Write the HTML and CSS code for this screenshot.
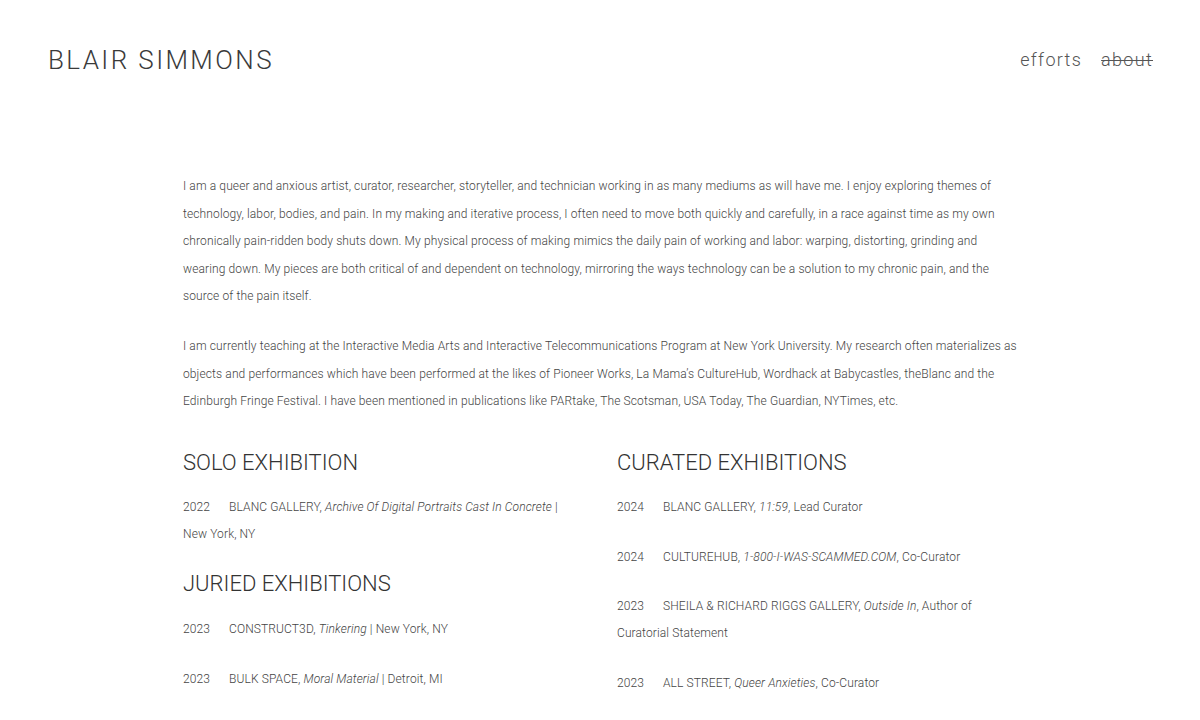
FILE: index.html
```html
<!DOCTYPE html>
<html lang="en">
<head>
<meta charset="utf-8">
<title>Blair Simmons — about</title>
<link rel="stylesheet" href="styles.css">
</head>
<body>
<header class="site-header">
  <a class="site-title" href="#">BLAIR SIMMONS</a>
  <nav class="site-nav">
    <a href="#" class="nav-link">efforts</a>
    <a href="#" class="nav-link nav-current">about</a>
  </nav>
</header>
<main class="content">
  <section class="intro">
    <p>I am a queer and anxious artist, curator, researcher, storyteller, and technician working in as many mediums as will have me. I enjoy exploring themes of technology, labor, bodies, and pain. In my making and iterative process, I often need to move both quickly and carefully, in a race against time as my own chronically pain-ridden body shuts down. My physical process of making mimics the daily pain of working and labor: warping, distorting, grinding and wearing down. My pieces are both critical of and dependent on technology, mirroring the ways technology can be a solution to my chronic pain, and the source of the pain itself.</p>
    <p>I am currently teaching at the Interactive Media Arts and Interactive Telecommunications Program at New York University. My research often materializes as objects and performances which have been performed at the likes of Pioneer Works, La Mama’s CultureHub, Wordhack at Babycastles, theBlanc and the Edinburgh Fringe Festival. I have been mentioned in publications like PARtake, The Scotsman, USA Today, The Guardian, NYTimes, etc.</p>
  </section>
  <section class="columns">
    <div class="col">
      <h2>SOLO EXHIBITION</h2>
      <p class="entry"><span class="year">2022</span>BLANC GALLERY, <em>Archive Of Digital Portraits Cast In Concrete</em> | New York, NY</p>
      <h2>JURIED EXHIBITIONS</h2>
      <p class="entry"><span class="year">2023</span>CONSTRUCT3D, <em>Tinkering</em> | New York, NY</p>
      <p class="entry"><span class="year">2023</span>BULK SPACE, <em>Moral Material</em> | Detroit, MI</p>
    </div>
    <div class="col">
      <h2>CURATED EXHIBITIONS</h2>
      <p class="entry"><span class="year">2024</span>BLANC GALLERY, <em>11:59</em>, Lead Curator</p>
      <p class="entry"><span class="year">2024</span>CULTUREHUB, <em>1-800-I-WAS-SCAMMED.COM</em>, Co-Curator</p>
      <p class="entry"><span class="year">2023</span>SHEILA &amp; RICHARD RIGGS GALLERY, <em>Outside In</em>, Author of Curatorial Statement</p>
      <p class="entry"><span class="year">2023</span>ALL STREET, <em>Queer Anxieties</em>, Co-Curator</p>
    </div>
  </section>
</main>
</body>
</html>
```
FILE: styles.css
```css
* { box-sizing: border-box; }
html, body { margin: 0; padding: 0; background: #fff; }
body {
  font-family: Roboto, "Liberation Sans", sans-serif;
  font-weight: 300;
  color: #444;
}
a { color: inherit; text-decoration: none; }

.site-header {
  display: flex;
  justify-content: space-between;
  align-items: center;
  padding: 43px 48px 0 48px;
  height: 77px;
}
.site-title {
  font-size: 26px;
  letter-spacing: 2.4px;
  color: #3a3a3a;
  line-height: 34px;
}
.site-nav {
  display: flex;
  gap: 19px;
  margin-right: -1px;
}
.nav-link {
  font-size: 18px;
  letter-spacing: 1.3px;
  color: #555;
  line-height: 34px;
}
.nav-current { text-decoration: line-through; text-decoration-thickness: 1px; }

.content {
  width: 834px;
  margin: 96px auto 0;
}
.intro p {
  font-size: 12px;
  letter-spacing: 0.12px;
  line-height: 27.5px;
  margin: 0 0 22.5px;
}
.intro p:last-child { margin-bottom: 0; }

.columns {
  display: grid;
  grid-template-columns: 400px 400px;
  column-gap: 34px;
  margin-top: 34px;
}
.col h2 {
  font-size: 22px;
  font-weight: 300;
  color: #333;
  line-height: 26px;
  margin: 0 0 18.75px;
}
.col .entry + h2 { margin-top: 23px; }
.entry {
  font-size: 12px;
  letter-spacing: 0.12px;
  line-height: 27px;
  margin: 0 0 22.5px;
}
.year {
  display: inline-block;
  width: 46px;
}
```
